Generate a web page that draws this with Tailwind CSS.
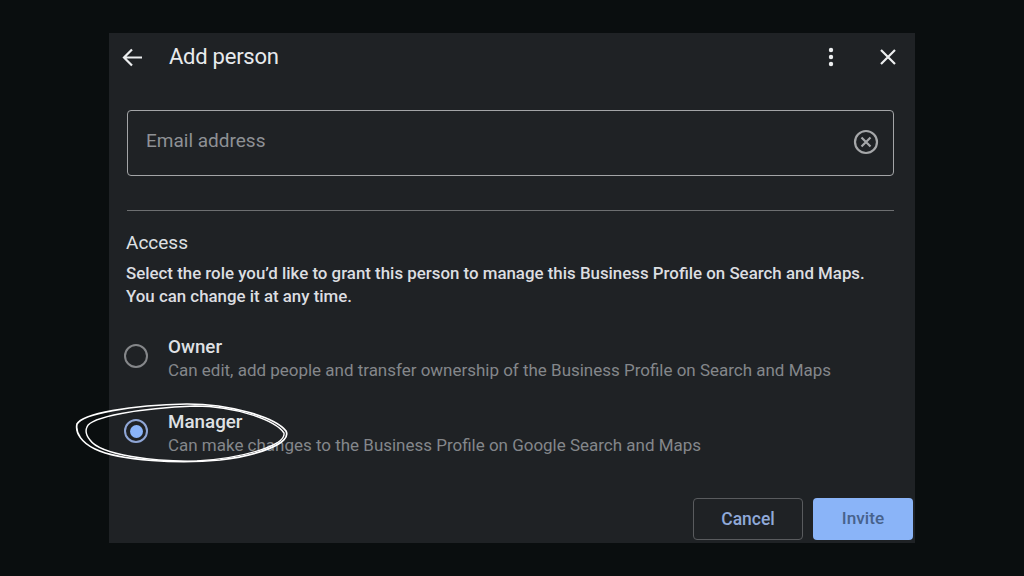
<!DOCTYPE html>
<html lang="en">
<head>
  <meta charset="UTF-8" />
  <meta name="viewport" content="width=device-width, initial-scale=1.0" />
  <title>Add person</title>
  <script src="https://cdn.jsdelivr.net/npm/@tailwindcss/browser@4"></script>
</head>
<body class="bg-[#0a0e0f] w-[1024px] h-[576px] overflow-hidden font-['Roboto',sans-serif]">
  <div class="relative w-[1024px] h-[576px] pt-[33px] pl-[109px]">
    <!-- Dialog -->
    <div class="w-[806px] h-[510px] bg-[#1f2225] flex flex-col">
      <!-- Header -->
      <div class="h-[47px] flex items-center pl-[12px] pr-[18px]">
        <svg class="w-[22px] h-[22px]" viewBox="0 0 22 22" fill="none" stroke="#eceeef" stroke-width="2.2"><path d="M21 11.5H3M11 3.5l-8 8 8 8"/></svg>
        <h1 class="ml-[26px] text-[22px] leading-[28px] text-[#e8eaed] tracking-[-0.25px]">Add person</h1>
        <svg class="ml-auto mr-[1px] w-[6px] h-[20px]" viewBox="0 0 6 20" fill="#eceeef"><circle cx="3" cy="3" r="2.2"/><circle cx="3" cy="10" r="2.2"/><circle cx="3" cy="17" r="2.2"/></svg>
        <svg class="ml-[44px] w-[18px] h-[18px]" viewBox="0 0 18 18" fill="none" stroke="#eceeef" stroke-width="2.2"><path d="M2 2l14 14M16 2L2 16"/></svg>
      </div>

      <!-- Email field -->
      <div class="mt-[30px] mx-[18px] h-[66px] w-[767px] border-[1.5px] border-[#a3a5a7] rounded-[4px] flex items-center pl-[18px] pr-[14px]">
        <span class="text-[19px] leading-[24px] mb-[4px] text-[#8e9195]">Email address</span>
        <svg class="ml-auto w-[26px] h-[26px] mb-[2px]" viewBox="0 0 26 26" fill="none" stroke="#a5a7a9" stroke-width="2.2"><circle cx="13" cy="13" r="11"/><path d="M8.5 8.5l9 9M17.5 8.5l-9 9"/></svg>
      </div>

      <div class="mt-[34px] mx-[18px] w-[767px] h-px bg-[#6d6f71]"></div>

      <!-- Access -->
      <h2 class="mt-[21px] ml-[17px] text-[19px] leading-[22px] text-[#dfe1e4]">Access</h2>
      <p class="mt-[8px] ml-[17px] text-[16.88px] leading-[23px] text-[#dcdee1] font-medium">Select the role you’d like to grant this person to manage this Business Profile on Search and Maps.<br />You can change it at any time.</p>

      <!-- Roles -->
      <div class="mt-[27px] ml-[15px] flex items-center h-[46px]">
        <span class="w-[24px] h-[24px] mb-[4px] rounded-full border-2 border-[#85878a]"></span>
        <div class="ml-[20px]">
          <div class="pt-[1px] text-[18.8px] leading-[22px] font-medium text-[#dfe1e4]">Owner</div>
          <div class="mt-[1px] text-[16.98px] leading-[22px] text-[#84878b]">Can edit, add people and transfer ownership of the Business Profile on Search and Maps</div>
        </div>
      </div>
      <div class="mt-[29px] ml-[15px] flex items-center h-[46px]">
        <span class="w-[24px] h-[24px] mb-[4px] rounded-full border-2 border-[#8fa6d6] flex items-center justify-center">
          <span class="w-[13px] h-[13px] rounded-full bg-[#8ab4f8]"></span>
        </span>
        <div class="ml-[20px]">
          <div class="pt-[1px] text-[18.8px] leading-[22px] font-medium text-[#dfe1e4]">Manager</div>
          <div class="mt-[1px] text-[16.98px] leading-[22px] text-[#84878b]">Can make changes to the Business Profile on Google Search and Maps</div>
        </div>
      </div>

      <!-- Actions -->
      <div class="mt-auto mb-[3px] mr-[2px] flex justify-end gap-[10px]">
        <button class="w-[110px] h-[42px] rounded-[4px] border border-[#595b5e] text-[17.5px] font-medium text-[#8fa9d9]">Cancel</button>
        <button class="w-[100px] h-[42px] rounded-[4px] bg-[#8ab4f8] text-[17.2px] font-medium text-[#47628c]">Invite</button>
      </div>
    </div>

    <!-- Hand-drawn circle -->
    <svg class="absolute left-[70px] top-[395px] w-[230px] h-[75px]" viewBox="0 0 230 75" fill="none" stroke="#ffffff" stroke-linecap="round">
      <path stroke-width="1.7" d="M7 29C12 19 60 10 117 9C160 9 205 22 216 36C222 48 190 60 150 65C110 69 50 66 25 54C12 48 5 38 7 29"/>
      <path stroke-width="1.4" d="M17 32C20 22 70 13 125 11C165 11 205 25 214 38C216 50 175 63 127 66C85 67 30 60 20 45C16 40 15 36 17 32"/>
    </svg>
  </div>
</body>
</html>
